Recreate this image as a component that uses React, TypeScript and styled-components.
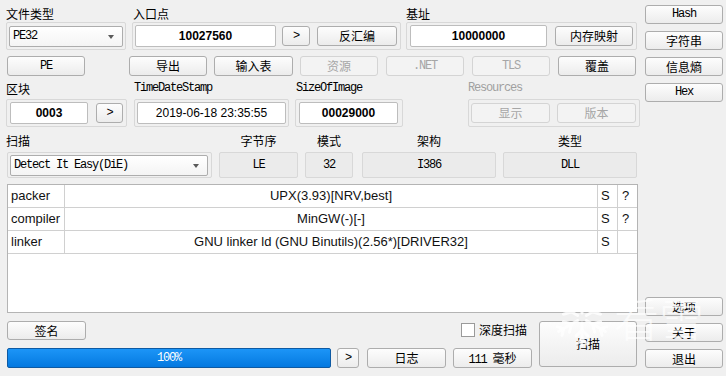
import React from "react";
import styled, { createGlobalStyle } from "styled-components";

const CJK = `"Noto Sans CJK SC", "Liberation Sans", sans-serif`;
const MONO = `"Liberation Mono", "Noto Sans CJK SC", monospace`;
const SANS = `"Liberation Sans", "Noto Sans CJK SC", sans-serif`;

// SimSun-like latin: 6px per char
const MONO_SIZE = "12px";
const MONO_SPACING = "-1.2px";

const GlobalStyle = createGlobalStyle`
  html, body {
    margin: 0;
    padding: 0;
    background: #f0f0f0;
  }
  body {
    overflow: hidden;
  }
`;

const Window = styled.div`
  position: relative;
  box-sizing: border-box;
  width: 726px;
  height: 376px;
  padding: 5px 3px 0 6px;
  display: flex;
  gap: 7px;
  background: #f0f0f0;
  font-family: ${CJK};
  font-size: 12px;
  color: #000;
`;

const Main = styled.div`
  width: 632px;
  flex: none;
  display: flex;
  flex-direction: column;
`;

const Side = styled.div`
  width: 78px;
  flex: none;
  box-sizing: border-box;
  display: flex;
  flex-direction: column;
  justify-content: space-between;
  padding-bottom: 8px;
`;

const SideGroup = styled.div`
  display: flex;
  flex-direction: column;
  gap: 7px;
`;

const Row = styled.div<{ $mt?: number }>`
  display: flex;
  align-items: flex-start;
  margin-top: ${(p) => p.$mt ?? 0}px;
`;

const Group = styled.div<{ $w: number; $ml?: number }>`
  flex: none;
  display: flex;
  flex-direction: column;
  width: ${(p) => p.$w}px;
  margin-left: ${(p) => p.$ml ?? 0}px;
`;

const Caption = styled.div<{
  $h: number;
  $pt?: number;
  $pl?: number;
  $center?: boolean;
  $mono?: boolean;
  $off?: boolean;
}>`
  box-sizing: border-box;
  height: ${(p) => p.$h}px;
  padding-top: ${(p) => p.$pt ?? 0}px;
  padding-left: ${(p) => p.$pl ?? 0}px;
  line-height: ${(p) => p.$h - (p.$pt ?? 0)}px;
  text-align: ${(p) => (p.$center ? "center" : "left")};
  white-space: nowrap;
  font-family: ${(p) => (p.$mono ? MONO : CJK)};
  font-size: ${(p) => (p.$mono ? MONO_SIZE : "12px")};
  letter-spacing: ${(p) => (p.$mono ? MONO_SPACING : "0")};
  color: ${(p) => (p.$off ? "#a0a0a0" : "#000")};
`;

const Frame = styled.div<{ $h?: number; $gap?: number; $pl?: number }>`
  box-sizing: border-box;
  height: ${(p) => p.$h ?? 28}px;
  border: 1px solid #d8d8d8;
  border-radius: 2px;
  display: flex;
  align-items: center;
  gap: ${(p) => p.$gap ?? 0}px;
  padding-left: ${(p) => p.$pl ?? 2}px;
`;

const Btn = styled.button<{
  $w: number;
  $h?: number;
  $ml?: number;
  $mt?: number;
  $mono?: boolean;
}>`
  flex: none;
  box-sizing: border-box;
  width: ${(p) => p.$w}px;
  height: ${(p) => p.$h ?? 20}px;
  margin: ${(p) => p.$mt ?? 0}px 0 0 ${(p) => p.$ml ?? 0}px;
  padding: 0;
  border: 1px solid #adadad;
  border-radius: 3px;
  background: linear-gradient(#fdfdfd, #ececec);
  color: #000;
  font-family: ${(p) => (p.$mono ? MONO : CJK)};
  font-size: ${(p) => (p.$mono ? MONO_SIZE : "12px")};
  letter-spacing: ${(p) => (p.$mono ? MONO_SPACING : "0")};
  line-height: ${(p) => (p.$h ?? 20) - 2}px;
  white-space: nowrap;

  &:disabled {
    border-color: #d4d4d4;
    background: #f3f3f3;
    color: #a6a6a6;
  }
`;

const MonoText = styled.span`
  font-family: ${MONO};
  font-size: ${MONO_SIZE};
  letter-spacing: ${MONO_SPACING};
  white-space: pre;
`;

const Field = styled.div<{ $w: number; $plain?: boolean }>`
  flex: none;
  box-sizing: border-box;
  width: ${(p) => p.$w}px;
  height: 22px;
  border: 1px solid #bdbdbd;
  border-radius: 2px;
  background: #fff;
  text-align: center;
  line-height: 20px;
  font-family: ${SANS};
  font-size: 12px;
  font-weight: ${(p) => (p.$plain ? 400 : 700)};
`;

const Combo = styled.div<{ $w: number }>`
  position: relative;
  flex: none;
  box-sizing: border-box;
  width: ${(p) => p.$w}px;
  height: 21px;
  border: 1px solid #adadad;
  border-radius: 2px;
  background: linear-gradient(#ffffff, #f4f4f4);
  padding-left: 3px;
  line-height: 19px;
  font-family: ${MONO};
  font-size: ${MONO_SIZE};
  letter-spacing: ${MONO_SPACING};

  &::after {
    content: "";
    position: absolute;
    right: 8px;
    top: 8px;
    border-left: 3.5px solid transparent;
    border-right: 3.5px solid transparent;
    border-top: 4px solid #5a5a5a;
  }
`;

const InfoBox = styled.div<{ $h?: number }>`
  box-sizing: border-box;
  height: ${(p) => p.$h ?? 26}px;
  border: 1px solid #d8d8d8;
  border-radius: 2px;
  background: #ebebeb;
  text-align: center;
  line-height: ${(p) => (p.$h ?? 26) - 2}px;
  font-family: ${MONO};
  font-size: ${MONO_SIZE};
  letter-spacing: ${MONO_SPACING};
`;

const Table = styled.div`
  box-sizing: border-box;
  width: 631px;
  height: 129px;
  margin: 6px 0 0 1px;
  border: 1px solid #b4b4b4;
  background: #fff;
`;

const TRow = styled.div`
  display: grid;
  grid-template-columns: 57px 533px 20px 1fr;
  box-sizing: border-box;
  height: 23px;
  border-bottom: 1px solid #d0d0d0;
`;

const Cell = styled.div<{ $center?: boolean; $pl?: number; $last?: boolean }>`
  box-sizing: border-box;
  border-right: ${(p) => (p.$last ? "none" : "1px solid #d0d0d0")};
  padding-left: ${(p) => p.$pl ?? 0}px;
  text-align: ${(p) => (p.$center ? "center" : "left")};
  line-height: 22px;
  font-family: ${SANS};
  font-size: 13px;
  color: #111;
  white-space: nowrap;
  overflow: hidden;
`;

const Bottom = styled.div`
  display: flex;
  margin-top: 7px;
`;

const BottomLeft = styled.div`
  width: 526px;
  margin-left: 1px;
  display: flex;
  flex-direction: column;
`;

const BottomTop = styled.div`
  height: 20px;
  padding-top: 1px;
  display: flex;
  align-items: flex-start;
  justify-content: space-between;
`;

const BottomBar = styled.div`
  display: flex;
  margin-top: 7px;
`;

const CheckLine = styled.label`
  display: flex;
  align-items: center;
  gap: 4px;
  height: 15px;
  margin: 1px 6px 0 0;
  font-size: 12px;
`;

const CheckBox = styled.span`
  box-sizing: border-box;
  width: 14px;
  height: 14px;
  border: 1px solid #9a9a9a;
  background: #fff;
`;

const Progress = styled.div`
  box-sizing: border-box;
  width: 324px;
  height: 20px;
  border: 1px solid #0e5aa3;
  border-radius: 2px;
  background: linear-gradient(#1c95f7, #0479e0);
  color: #fff;
  text-align: center;
  line-height: 18px;
  font-family: ${MONO};
  font-size: ${MONO_SIZE};
  letter-spacing: ${MONO_SPACING};
`;

// watermark laid over the lower right corner
const Mark = styled.div`
  position: absolute;
  left: 0;
  top: 0;
  width: 0;
  height: 0;
  pointer-events: none;
`;

const MarkFlake = styled.svg`
  position: absolute;
  left: 552px;
  top: 288px;
  opacity: 0.8;
`;

const MarkText = styled.div`
  position: absolute;
  left: 614px;
  top: 295px;
  font-family: ${CJK};
  font-size: 45px;
  font-weight: 300;
  line-height: 1;
  white-space: nowrap;
  color: rgba(255, 255, 255, 0.7);
`;

const Snowflake = () => {
  const arms = [0, 60, 120, 180, 240, 300];
  return (
    <MarkFlake width="60" height="60" viewBox="-30 -30 60 60">
      <g stroke="#fff" strokeWidth="3" strokeLinecap="round" fill="none">
        {arms.map((a) => (
          <g key={a} transform={`rotate(${a})`}>
            <line x1="0" y1="-5" x2="0" y2="-27" />
            <polyline points="-6,-18 0,-12 6,-18" />
            <polyline points="-5,-26 0,-21 5,-26" />
          </g>
        ))}
      </g>
    </MarkFlake>
  );
};

const results = [
  { type: "packer", name: "UPX(3.93)[NRV,best]", s: "S", q: "?" },
  { type: "compiler", name: "MinGW(-)[-]", s: "S", q: "?" },
  { type: "linker", name: "GNU linker ld (GNU Binutils)(2.56*)[DRIVER32]", s: "S", q: "" },
];

export default function App() {
  return (
    <>
      <GlobalStyle />
      <Window>
        <Main>
          <Row>
            <Group $w={120}>
              <Caption $h={17}>文件类型</Caption>
              <Frame $pl={2}>
                <Combo $w={114}>PE32</Combo>
              </Frame>
            </Group>
            <Group $w={269} $ml={6}>
              <Caption $h={17} $pl={1}>入口点</Caption>
              <Frame $pl={2} $gap={6}>
                <Field $w={141}>10027560</Field>
                <Btn $w={28} $mono>&gt;</Btn>
                <Btn $w={80} $ml={1}>反汇编</Btn>
              </Frame>
            </Group>
            <Group $w={231} $ml={5}>
              <Caption $h={17}>基址</Caption>
              <Frame $pl={3} $gap={8}>
                <Field $w={137}>10000000</Field>
                <Btn $w={78}>内存映射</Btn>
              </Frame>
            </Group>
          </Row>

          <Row $mt={6}>
            <Btn $w={78} $ml={1} $mono>PE</Btn>
            <Btn $w={78} $ml={44}>导出</Btn>
            <Btn $w={79} $ml={7}>输入表</Btn>
            <Btn $w={78} $ml={7} disabled>资源</Btn>
            <Btn $w={78} $ml={8} $mono disabled>.NET</Btn>
            <Btn $w={78} $ml={8} $mono disabled>TLS</Btn>
            <Btn $w={78} $ml={8}>覆盖</Btn>
          </Row>

          <Row>
            <Group $w={121}>
              <Caption $h={23} $pt={2}>区块</Caption>
              <Frame $pl={3} $gap={8}>
                <Field $w={78}>0003</Field>
                <Btn $w={27} $mono>&gt;</Btn>
              </Frame>
            </Group>
            <Group $w={155} $ml={7}>
              <Caption $h={23} $pt={2} $mono>TimeDateStamp</Caption>
              <Frame $pl={2}>
                <Field $w={149} $plain>2019-06-18 23:35:55</Field>
              </Frame>
            </Group>
            <Group $w={108} $ml={6}>
              <Caption $h={23} $pt={2} $pl={1} $mono>SizeOfImage</Caption>
              <Frame $pl={3}>
                <Field $w={99}>00029000</Field>
              </Frame>
            </Group>
            <Group $w={172} $ml={65}>
              <Caption $h={23} $pt={2} $mono $off>Resources</Caption>
              <Frame $pl={2} $gap={7}>
                <Btn $w={79} disabled>显示</Btn>
                <Btn $w={79} disabled>版本</Btn>
              </Frame>
            </Group>
          </Row>

          <Row>
            <Group $w={206}>
              <Caption $h={25} $pt={2}>扫描</Caption>
              <Frame $h={26} $pl={2} style={{ marginLeft: 1 }}>
                <Combo $w={198}>Detect It Easy(DiE)</Combo>
              </Frame>
            </Group>
            <Group $w={79} $ml={7}>
              <Caption $h={25} $pt={2} $center>字节序</Caption>
              <InfoBox>LE</InfoBox>
            </Group>
            <Group $w={48} $ml={7}>
              <Caption $h={25} $pt={2} $center>模式</Caption>
              <InfoBox>32</InfoBox>
            </Group>
            <Group $w={134} $ml={9}>
              <Caption $h={25} $pt={2} $center>架构</Caption>
              <InfoBox>I386</InfoBox>
            </Group>
            <Group $w={134} $ml={7}>
              <Caption $h={25} $pt={2} $center>类型</Caption>
              <InfoBox>DLL</InfoBox>
            </Group>
          </Row>

          <Table>
            {results.map((r) => (
              <TRow key={r.type}>
                <Cell $pl={3}>{r.type}</Cell>
                <Cell $center>{r.name}</Cell>
                <Cell $pl={3}>{r.s}</Cell>
                <Cell $pl={4} $last>{r.q}</Cell>
              </TRow>
            ))}
          </Table>

          <Bottom>
            <BottomLeft>
              <BottomTop>
                <Btn $w={79} $h={19}>签名</Btn>
                <CheckLine>
                  <CheckBox />
                  深度扫描
                </CheckLine>
              </BottomTop>
              <BottomBar>
                <Progress>100%</Progress>
                <Btn $w={22} $ml={6} $mono>&gt;</Btn>
                <Btn $w={79} $ml={8}>日志</Btn>
                <Btn $w={79} $ml={7}>
                  <MonoText>{"111 "}</MonoText>毫秒
                </Btn>
              </BottomBar>
            </BottomLeft>
            <Btn $w={98} $h={46} $ml={6} $mt={1}>扫描</Btn>
          </Bottom>
        </Main>

        <Side>
          <SideGroup>
            <Btn $w={78} $h={19} $mono>Hash</Btn>
            <Btn $w={78} $h={19}>字符串</Btn>
            <Btn $w={78} $h={19}>信息熵</Btn>
            <Btn $w={78} $h={19} $mono>Hex</Btn>
          </SideGroup>
          <SideGroup>
            <Btn $w={78} $h={19}>选项</Btn>
            <Btn $w={78} $h={19}>关于</Btn>
            <Btn $w={78} $h={19}>退出</Btn>
          </SideGroup>
        </Side>

        <Mark>
          <Snowflake />
          <MarkText>看雪</MarkText>
        </Mark>
      </Window>
    </>
  );
}
